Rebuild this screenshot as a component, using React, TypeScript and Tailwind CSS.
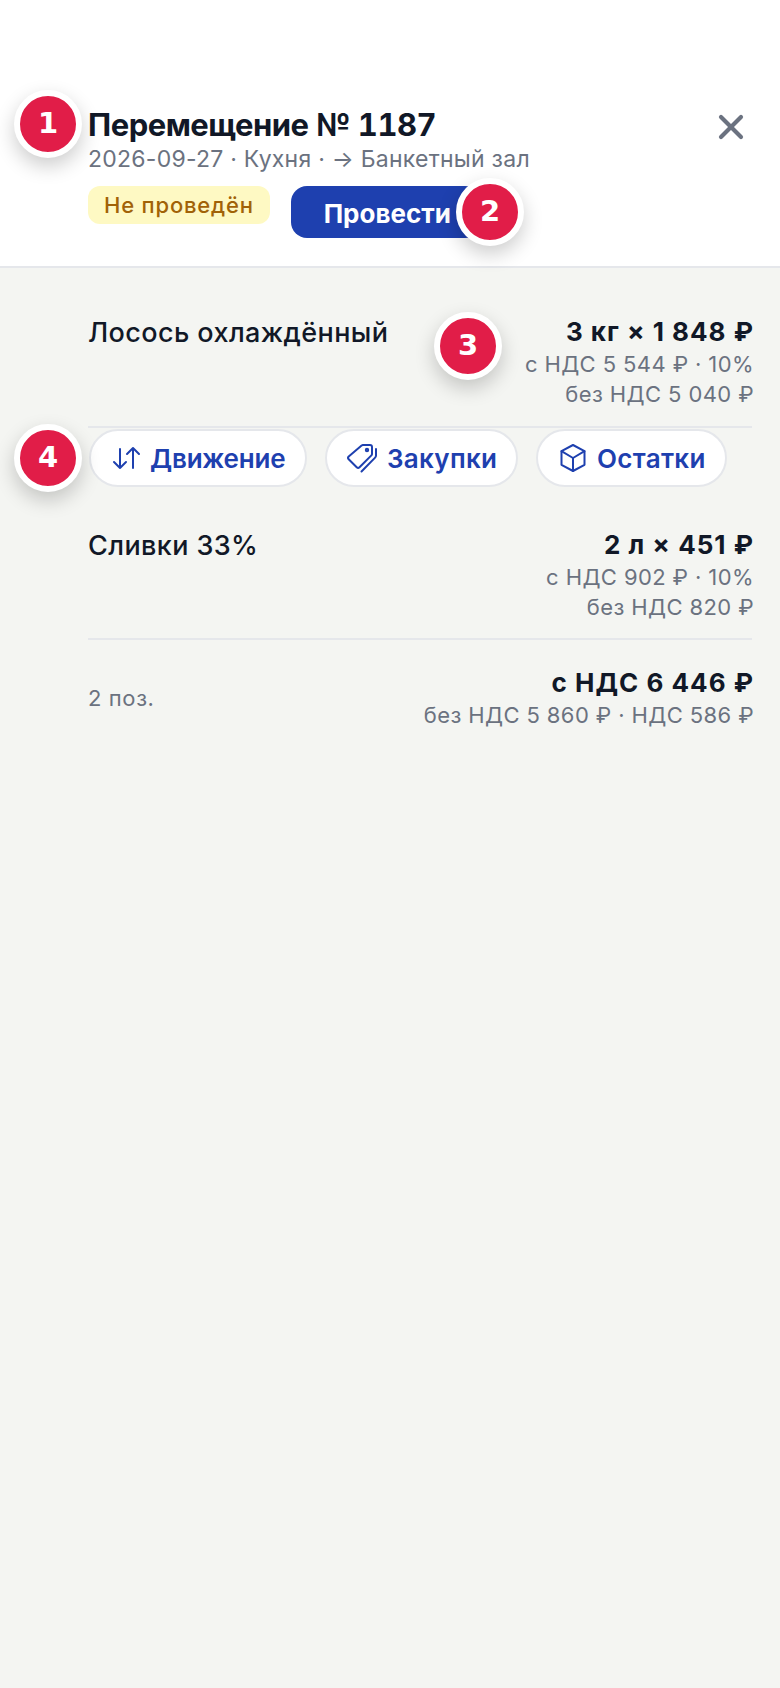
import type { ReactNode } from 'react';
import { X } from 'lucide-react';

function Marker({ n, className }: { n: number; className: string }) {
  return (
    <div
      className={`absolute w-[68px] h-[68px] rounded-full bg-[#e11d48] border-[6px] border-white shadow-[0_8px_20px_rgba(0,0,0,0.2)] flex items-center justify-center text-white text-[29px] font-bold font-['DejaVu_Sans',sans-serif] ${className}`}
    >
      {n}
    </div>
  );
}

function LineRow({ name, qty, gross, net }: { name: string; qty: string; gross: string; net: string }) {
  return (
    <div className="flex justify-between items-start">
      <div className="text-[27px] leading-[36px] tracking-[0.4px] font-medium text-[#111827]">{name}</div>
      <div className="text-right -mr-[2px]">
        <div className="text-[26px] leading-[34px] tracking-[1px] font-bold text-[#111827]">{qty}</div>
        <div className="text-[22px] leading-[30px] tracking-[0.4px] text-[#6b7280]">{gross}</div>
        <div className="text-[22px] leading-[30px] tracking-[0.4px] text-[#6b7280]">{net}</div>
      </div>
    </div>
  );
}

function Pill({ icon, label, className }: { icon: ReactNode; label: string; className: string }) {
  return (
    <button
      className={`h-[58px] flex items-center rounded-full bg-white border-2 border-[#e5e7eb] text-[#1e40af] text-[26px] font-semibold ${className}`}
    >
      {icon}
      {label}
    </button>
  );
}

function MoveIcon() {
  return (
    <svg width="30" height="24" viewBox="0 0 30 24" fill="none" stroke="currentColor" strokeWidth="2" strokeLinecap="round" strokeLinejoin="round">
      <path d="M8 3v19M2 16l6 6 6-6" />
      <path d="M21 22V2M15 8l6-6 6 6" />
    </svg>
  );
}

function TagIcon() {
  return (
    <svg width="34" height="32" viewBox="0 0 34 32" fill="none" stroke="currentColor" strokeWidth="2" strokeLinecap="round" strokeLinejoin="round">
      <path d="M19 3h7a2 2 0 0 1 2 2v7a2 2 0 0 1-.6 1.4L15.5 25.3a2 2 0 0 1-2.8 0l-8-8a2 2 0 0 1 0-2.8L17.600 3.600A2 2 0 0 1 19 3Z" />
      <path d="M32 7v6.500a3 3 0 0 1-.9 2.100L17.500 29.500" />
      <circle cx="23" cy="8" r="1.200" />
    </svg>
  );
}

function BoxIcon() {
  return (
    <svg width="28" height="30" viewBox="0 0 28 30" fill="none" stroke="currentColor" strokeWidth="2" strokeLinecap="round" strokeLinejoin="round">
      <path d="M14 2l11.500 6.200v13.600L14 28 2.500 21.800V8.200Z" />
      <path d="M2.500 8.200 14 15l11.500-6.800M14 15v13" />
    </svg>
  );
}

export default function App() {
  return (
    <div className="relative min-h-[1688px] bg-[#f4f5f2] font-['Inter',sans-serif]">
      {/* Header */}
      <div className="bg-white pt-[107px] pl-[88px] pr-[29px] h-[268px] border-b-2 border-[#e5e7eb]">
        <div className="flex justify-between items-start">
          <div>
            <div className="text-[31px] leading-[36px] tracking-[-0.5px] font-bold tabular-nums text-[#111827]">Перемещение № 1187</div>
            <div className="text-[23px] leading-[32px] tracking-[0.25px] text-[#6b7280]">2026-09-27 · Кухня · → Банкетный зал</div>
          </div>
          <X size={40} className="text-[#6b7280]" strokeWidth={2.5} />
        </div>
        <div className="flex items-start gap-[21px] mt-[11px]">
          <span className="h-[38px] px-[16px] flex items-center rounded-[12px] bg-[#fef9c3] text-[#a16207] text-[22px] font-medium tracking-[0.8px]">
            Не проведён
          </span>
          <button className="w-[190px] h-[52px] pl-[33px] pt-[2px] text-left rounded-[16px] bg-[#1e40af] text-white text-[26px] font-bold">
            Провести
          </button>
        </div>
      </div>

      {/* Lines */}
      <div className="pl-[88px] pr-[28px] pt-[47px]">
        <div className="h-[111px]">
          <LineRow name="Лосось охлаждённый" qty="3 кг × 1 848 ₽" gross="с НДС 5 544 ₽ · 10%" net="без НДС 5 040 ₽" />
        </div>
        <div className="h-[2px] bg-[#e5e7eb]" />
        <div className="flex gap-[18px] mt-[1px] ml-[1px]">
          <Pill icon={<MoveIcon />} label="Движение" className="w-[218px] pl-[21px] gap-[8px] tracking-[-0.2px]" />
          <Pill icon={<TagIcon />} label="Закупки" className="w-[193px] pl-[17px] gap-[9px] tracking-[0.3px]" />
          <Pill icon={<BoxIcon />} label="Остатки" className="w-[191px] pl-[21px] gap-[10px] tracking-[0.3px]" />
        </div>
        <div className="mt-[41px] h-[110px]">
          <LineRow name="Сливки 33%" qty="2 л × 451 ₽" gross="с НДС 902 ₽ · 10%" net="без НДС 820 ₽" />
        </div>
        <div className="h-[2px] bg-[#e5e7eb]" />
        <div className="flex justify-between items-center mt-[26px] -mr-[2px]">
          <div className="text-[22px] tracking-[0.6px] text-[#6b7280]">2 поз.</div>
          <div className="text-right">
            <div className="text-[26px] leading-[34px] tracking-[1px] font-bold text-[#111827]">с НДС 6 446 ₽</div>
            <div className="text-[22px] leading-[30px] tracking-[0.4px] text-[#6b7280]">без НДС 5 860 ₽ · НДС 586 ₽</div>
          </div>
        </div>
      </div>

      {/* Numbered callouts */}
      <Marker n={1} className="left-[14px] top-[90px]" />
      <Marker n={2} className="left-[456px] top-[178px]" />
      <Marker n={3} className="left-[434px] top-[312px]" />
      <Marker n={4} className="left-[14px] top-[424px]" />
    </div>
  );
}
